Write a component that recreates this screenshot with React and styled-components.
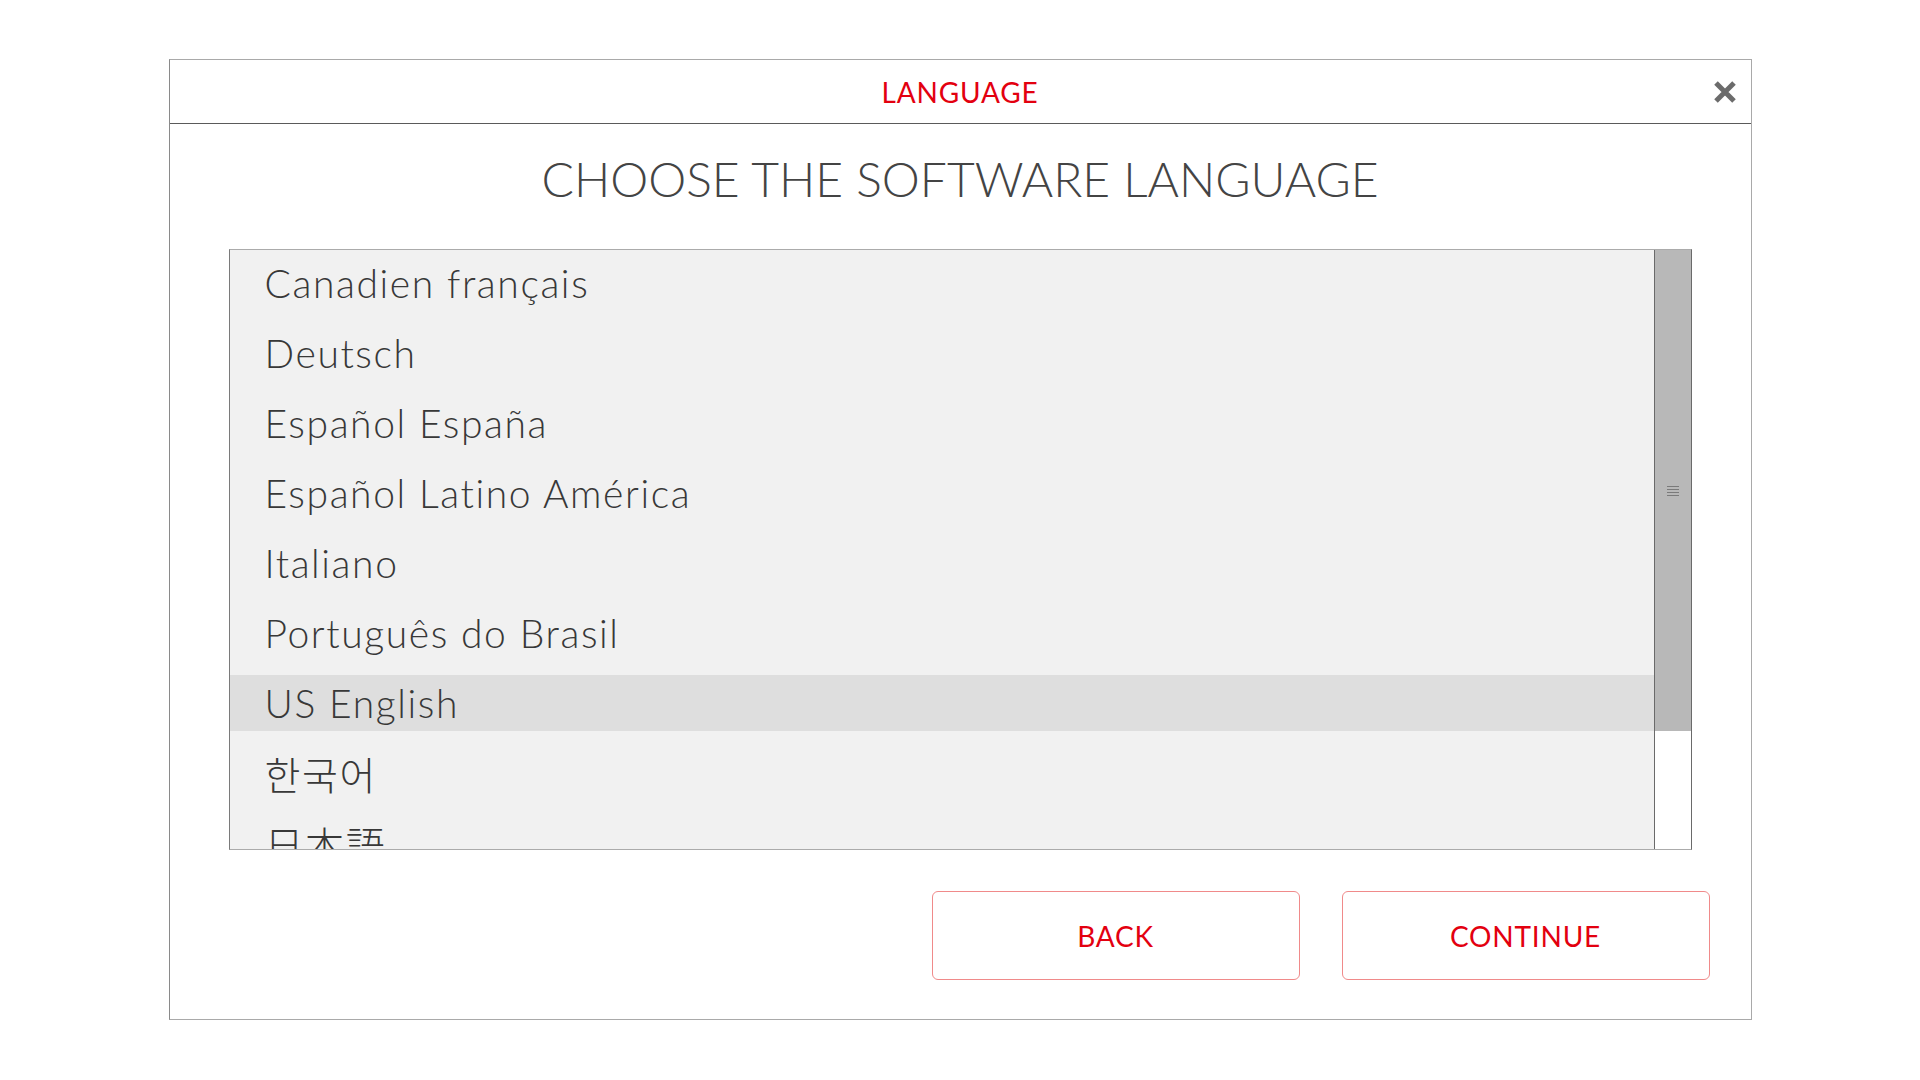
import React, { useState } from "react";
import styled, { createGlobalStyle, css } from "styled-components";

const GlobalStyle = createGlobalStyle`
  html, body {
    margin: 0;
    padding: 0;
    background: #ffffff;
  }
  body {
    font-family: "Lato", "Noto Sans CJK KR", "Noto Sans CJK JP", sans-serif;
  }
`;

const Page = styled.div`
  min-height: 100vh;
  display: flex;
  align-items: center;
  justify-content: center;
`;

const Dialog = styled.div`
  width: 1583px;
  height: 961px;
  margin-top: -1px;
  box-sizing: border-box;
  border: 1px solid #a9a9a9;
  border-left-color: #8a8a8a;
  background: #ffffff;
  display: flex;
  flex-direction: column;
`;

const Header = styled.div`
  position: relative;
  height: 63px;
  flex: none;
  border-bottom: 1px solid #5a5a5a;
  display: flex;
  align-items: center;
  justify-content: center;
`;

const HeaderTitle = styled.div`
  color: #e3000f;
  font-size: 28px;
  font-weight: 400;
  letter-spacing: 0.8px;
`;

const CloseButton = styled.button`
  position: absolute;
  right: 14px;
  top: 50%;
  transform: translateY(-50%);
  width: 24px;
  height: 24px;
  padding: 0;
  border: none;
  background: none;
  cursor: pointer;
  display: flex;
`;

const Title = styled.h1`
  margin: 0;
  height: 125px;
  box-sizing: border-box;
  padding-bottom: 16px;
  flex: none;
  display: flex;
  align-items: center;
  justify-content: center;
  color: #444444;
  font-size: 48px;
  font-weight: 300;
  letter-spacing: 0;
`;

const ListBox = styled.div`
  margin: 0 59px 0 59px;
  height: 601px;
  flex: none;
  box-sizing: border-box;
  border: 1px solid;
  border-color: #ababab #6a6a6a #ababab #7a7a7a;
  background: #f1f1f1;
  display: flex;
`;

const Rows = styled.div`
  flex: 1;
  overflow: hidden;
  margin-top: -2px;
`;

const Row = styled.div`
  height: 70px;
  box-sizing: border-box;
  padding: 7px 0;
  display: flex;
  cursor: pointer;
`;

const RowLabel = styled.div`
  flex: 1;
  display: flex;
  align-items: center;
  padding-left: 35px;
  color: #383838;
  font-size: 39px;
  font-weight: 300;
  letter-spacing: 1.6px;
  white-space: nowrap;

  ${({ $selected }) =>
    $selected &&
    css`
      background-color: #dedede;
    `}
`;

const ScrollTrack = styled.div`
  width: 36px;
  flex: none;
  border-left: 1px solid #6a6a6a;
  background: #ffffff;
  display: flex;
  flex-direction: column;
`;

const ScrollThumb = styled.div`
  height: 481px;
  background: #b8b8b8;
  display: flex;
  align-items: center;
  justify-content: center;
`;

const Grip = styled.div`
  width: 12px;
  height: 10px;
  background: repeating-linear-gradient(
    to bottom,
    #7a7a7a 0,
    #7a7a7a 1px,
    transparent 1px,
    transparent 3px
  );
`;

const Actions = styled.div`
  flex: none;
  display: flex;
  justify-content: flex-end;
  gap: 42px;
  margin-top: 41px;
  padding-right: 41px;
`;

const Button = styled.button`
  width: 368px;
  height: 89px;
  box-sizing: border-box;
  border: 1px solid #f08a8a;
  border-radius: 6px;
  background: #ffffff;
  color: #e3000f;
  font-family: "Lato", sans-serif;
  font-size: 28px;
  font-weight: 400;
  letter-spacing: 0.8px;
  cursor: pointer;
`;

const languages = [
  "Canadien français",
  "Deutsch",
  "Espan\u0303ol Espan\u0303a",
  "Espan\u0303ol Latino Ame\u0301rica",
  "Italiano",
  "Portugue\u0302s do Brasil",
  "US English",
  "한국어",
  "日本語",
];

const App = () => {
  const [selected, setSelected] = useState("US English");

  return (
    <Page>
      <GlobalStyle />
      <Dialog>
        <Header>
          <HeaderTitle>LANGUAGE</HeaderTitle>
          <CloseButton aria-label="Close">
            <svg width="24" height="24" viewBox="0 0 24 24">
              <path
                d="M3 3 L21 21 M21 3 L3 21"
                stroke="#6b6b6b"
                strokeWidth="5"
                fill="none"
              />
            </svg>
          </CloseButton>
        </Header>
        <Title>CHOOSE THE SOFTWARE LANGUAGE</Title>
        <ListBox>
          <Rows>
            {languages.map((lang) => (
              <Row key={lang} onClick={() => setSelected(lang)}>
                <RowLabel $selected={selected === lang}>{lang}</RowLabel>
              </Row>
            ))}
          </Rows>
          <ScrollTrack>
            <ScrollThumb>
              <Grip />
            </ScrollThumb>
          </ScrollTrack>
        </ListBox>
        <Actions>
          <Button>BACK</Button>
          <Button>CONTINUE</Button>
        </Actions>
      </Dialog>
    </Page>
  );
};

export default App;
